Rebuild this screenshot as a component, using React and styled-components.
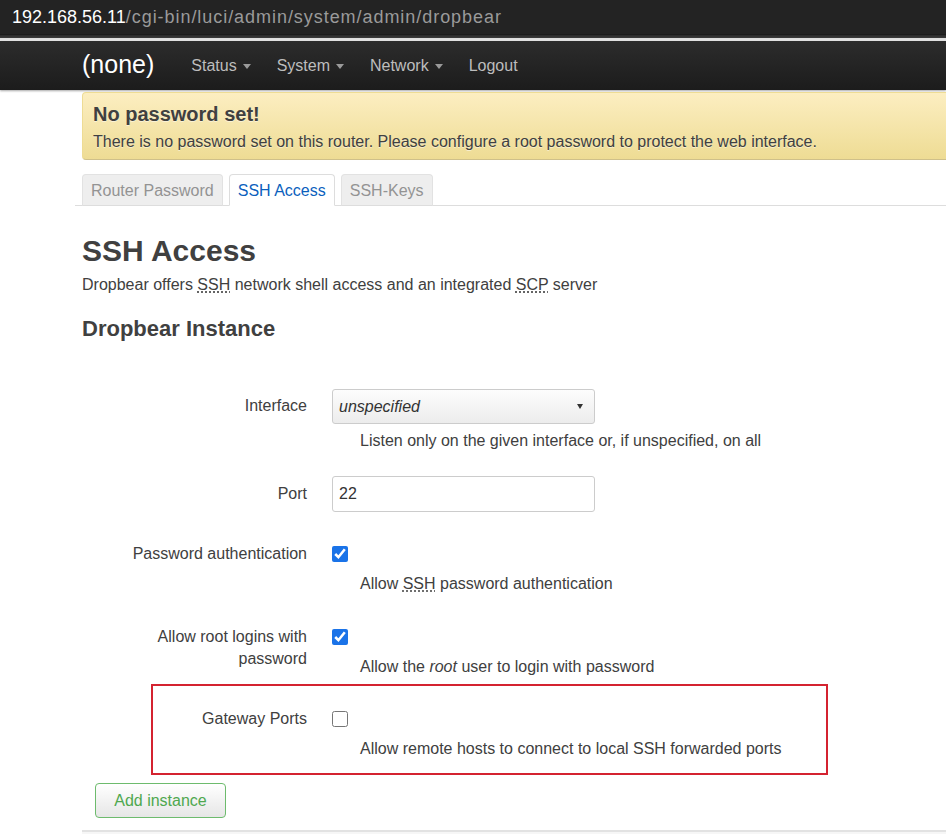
import React from 'react';
import styled, { createGlobalStyle } from 'styled-components';

const Global = createGlobalStyle`
  html, body { margin:0; padding:0; background:#fff; overflow:hidden; }
  body { font-family:"Liberation Sans", Arial, sans-serif; color:#404040; font-size:16px; }
  abbr { text-decoration: underline dotted; text-underline-offset: 2px; }
`;

const Page = styled.div` width:946px; height:834px; overflow:hidden; `;

const AddressBar = styled.div`
  height:34px; background:#232323; display:flex; align-items:center; padding-left:12px;
  font-size:18px; color:#9a9a9a; white-space:nowrap;
  b{ font-weight:400; color:#fff; }
  span{ letter-spacing:0.95px; }
`;
const ChromeEdge = styled.div`
  height:6px; background:linear-gradient(#2a2a2a 0, #3c3c3c 50%, #dcdcdc 50%, #e8e8e8 100%);
  border-top:1px solid #1c1c1c;
`;
const NavBar = styled.div`
  height:49px; background:linear-gradient(#2c2c2c, #1c1c1c);
  display:flex; align-items:center; padding-left:82px;
  box-shadow:0 1px 2px rgba(0,0,0,.35);
`;
const BrandName = styled.div` font-size:25px; color:#fff; margin-right:24px; margin-top:-2px; `;
const NavItem = styled.div`
  display:flex; align-items:center; padding:0 13px; font-size:16px; color:#bdbdbd;
`;
const Caret = styled.span`
  margin-left:6px; width:0; height:0; border-left:4.5px solid transparent; border-right:4.5px solid transparent;
  border-top:5px solid #9a9a9a; margin-top:2px;
`;

const Content = styled.div` padding:2px 0 0 82px; width:1100px; `;

const Alert = styled.div`
  height:68px; box-sizing:border-box; padding:9px 10px 0; border-radius:4px 0 0 4px;
  background:linear-gradient(#fceec1, #eedc94);
  border:1px solid #eedc94; border-bottom-color:#cfc08a;
  text-shadow:0 1px 0 rgba(255,255,255,.5);
  h4{ margin:0; font-size:20px; font-weight:700; line-height:24px; }
  p{ margin:5px 0 0; font-size:16px; line-height:22px; }
`;

const Tabs = styled.ul`
  list-style:none; display:flex; gap:6px; margin:14px 0 0 -7px; padding:0 0 0 7px;
  border-bottom:1px solid #ddd; height:31px;
`;
const Tab = styled.li`
  box-sizing:border-box; height:32px; padding:7px 8px 0; font-size:16px; line-height:18px;
  border:1px solid ${p => p.$active ? '#ddd' : '#e2e2e2'}; border-bottom-color:${p => p.$active ? '#fff' : '#ddd'};
  border-radius:4px 4px 0 0;
  background:${p => p.$active ? '#fff' : '#eee'}; color:${p => p.$active ? '#0b5fbd' : '#939393'};
`;

const Title = styled.h2` margin:28px 0 0; font-size:30px; font-weight:700; line-height:34px; color:#404040; `;
const Lead = styled.div` margin-top:7px; font-size:16px; line-height:20px; `;
const SectionTitle = styled.h3` margin:20px 0 0; font-size:22px; font-weight:700; line-height:28px; `;

const Form = styled.div` margin-top:46px; `;
const Row = styled.div`
  display:grid; grid-template-columns:${p => p.$label || 180}px 1fr; column-gap:25px;
  margin:${p => p.$gap || 0}px 0 0 ${p => p.$indent ?? 45}px;
`;
const Label = styled.div`
  text-align:right; font-size:16px; line-height:22px; padding-top:${p => p.$pt}px;
`;
const Field = styled.div` display:flex; flex-direction:column; `;
const Desc = styled.div` margin:7px 0 0 28px; font-size:16px; line-height:20px; white-space:nowrap; em{ font-style:italic; } `;

const Select = styled.div`
  box-sizing:border-box; width:263px; height:35px; border:1px solid #ccc; border-radius:3px;
  background:linear-gradient(#fdfdfd, #ececec); display:flex; align-items:center; justify-content:space-between;
  padding:0 11px 0 6px; font-size:16px; font-style:italic; color:#333;
`;
const SelCaret = styled.span`
  width:0; height:0; border-left:3px solid transparent; border-right:3px solid transparent; border-top:5px solid #333;
`;
const TextInput = styled.input`
  box-sizing:border-box; width:263px; height:36px; border:1px solid #ccc; border-radius:3px;
  padding:0 6px; font:16px "Liberation Sans", Arial, sans-serif; color:#333; outline:none;
`;
const CheckWrap = styled.div` height:26px; display:flex; align-items:center; `;
const Check = styled.input`
  width:16px; height:16px; margin:0; accent-color:#1a73e8;
`;

const Highlight = styled.div`
  margin:7px 0 0 69px; width:677px; box-sizing:border-box; border:2px solid #d42330;
  padding:20px 0 14px;
`;

const AddButton = styled.button`
  margin:8px 0 0 13px; height:35px; width:131px; box-sizing:border-box;
  border:1px solid #6dbb6d; border-radius:4px; background:linear-gradient(#fff, #e6e6e6);
  color:#4fa84f; font:16px "Liberation Sans", Arial, sans-serif; padding:0;
`;
const Footer = styled.div` margin-top:12px; height:10px; border-top:2px solid #e2e2e2; background:#f6f6f6; `;

export default function App(){
  return (
    <Page>
      <Global/>
      <AddressBar><b>192.168.56.11</b><span>/cgi-bin/luci/admin/system/admin/dropbear</span></AddressBar>
      <ChromeEdge/>
      <NavBar>
        <BrandName>(none)</BrandName>
        <NavItem>Status<Caret/></NavItem>
        <NavItem>System<Caret/></NavItem>
        <NavItem>Network<Caret/></NavItem>
        <NavItem>Logout</NavItem>
      </NavBar>
      <Content>
        <Alert>
          <h4>No password set!</h4>
          <p>There is no password set on this router. Please configure a root password to protect the web interface.</p>
        </Alert>
        <Tabs>
          <Tab>Router Password</Tab>
          <Tab $active>SSH Access</Tab>
          <Tab>SSH-Keys</Tab>
        </Tabs>
        <Title>SSH Access</Title>
        <Lead>Dropbear offers <abbr>SSH</abbr> network shell access and an integrated <abbr>SCP</abbr> server</Lead>
        <SectionTitle>Dropbear Instance</SectionTitle>
        <Form>
          <Row>
            <Label $pt={6}>Interface</Label>
            <Field>
              <Select>unspecified<SelCaret/></Select>
              <Desc>Listen only on the given interface or, if unspecified, on all</Desc>
            </Field>
          </Row>
          <Row $gap={25}>
            <Label $pt={7}>Port</Label>
            <Field><TextInput defaultValue="22"/></Field>
          </Row>
          <Row $gap={29}>
            <Label $pt={2}>Password authentication</Label>
            <Field>
              <CheckWrap><Check type="checkbox" defaultChecked/></CheckWrap>
              <Desc>Allow <abbr>SSH</abbr> password authentication</Desc>
            </Field>
          </Row>
          <Row $gap={30}>
            <Label $pt={2}>Allow root logins with password</Label>
            <Field>
              <CheckWrap><Check type="checkbox" defaultChecked/></CheckWrap>
              <Desc>Allow the <em>root</em> user to login with password</Desc>
            </Field>
          </Row>
          <Highlight>
            <Row $label={154} $indent={0}>
              <Label $pt={2}>Gateway Ports</Label>
              <Field>
                <CheckWrap><Check type="checkbox"/></CheckWrap>
                <Desc>Allow remote hosts to connect to local SSH forwarded ports</Desc>
              </Field>
            </Row>
          </Highlight>
          <AddButton>Add instance</AddButton>
        </Form>
        <Footer/>
      </Content>
    </Page>
  );
}
